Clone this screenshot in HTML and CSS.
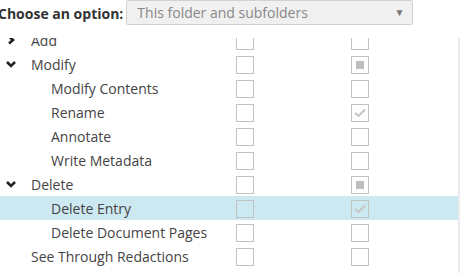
FILE: index.html
```html
<!DOCTYPE html>
<html lang="en">
<head>
    <meta charset="UTF-8">
    <title>Permissions</title>
    <link rel="stylesheet" href="styles.css">
</head>
<body>
    <div class="header">
        <label class="choose-label">Choose an option:</label>
        <div class="select-box">
            <span class="select-text">This folder and subfolders</span>
            <span class="select-arrow">&#9660;</span>
        </div>
    </div>

    <div class="list-view">
        <div class="list">
            <div class="row">
                <div class="name"><span class="chev"><svg width="10" height="10" viewBox="0 0 10 10"><path d="M3 1.5 L7 5 L3 8.5" fill="none" stroke="#222" stroke-width="2.6"/></svg></span>Add</div>
                <span class="check"></span>
                <span class="check"></span>
            </div>
            <div class="row">
                <div class="name"><span class="chev"><svg width="10" height="10" viewBox="0 0 10 10"><path d="M1 3 L5 7 L9 3" fill="none" stroke="#222" stroke-width="2.6"/></svg></span>Modify</div>
                <span class="check"></span>
                <span class="check partial"></span>
            </div>
            <div class="row">
                <div class="name sub">Modify Contents</div>
                <span class="check"></span>
                <span class="check"></span>
            </div>
            <div class="row">
                <div class="name sub">Rename</div>
                <span class="check"></span>
                <span class="check checked"><svg width="12" height="10" viewBox="0 0 12 10"><path d="M1 5 L4.5 8 L11 1.5" fill="none" stroke="#c4c4c4" stroke-width="2"/></svg></span>
            </div>
            <div class="row">
                <div class="name sub">Annotate</div>
                <span class="check"></span>
                <span class="check"></span>
            </div>
            <div class="row">
                <div class="name sub">Write Metadata</div>
                <span class="check"></span>
                <span class="check"></span>
            </div>
            <div class="row">
                <div class="name"><span class="chev"><svg width="10" height="10" viewBox="0 0 10 10"><path d="M1 3 L5 7 L9 3" fill="none" stroke="#222" stroke-width="2.6"/></svg></span>Delete</div>
                <span class="check"></span>
                <span class="check partial"></span>
            </div>
            <div class="row selected">
                <div class="name sub">Delete Entry</div>
                <span class="check"></span>
                <span class="check checked"><svg width="12" height="10" viewBox="0 0 12 10"><path d="M1 5 L4.5 8 L11 1.5" fill="none" stroke="#c4c4c4" stroke-width="2"/></svg></span>
            </div>
            <div class="row">
                <div class="name sub">Delete Document Pages</div>
                <span class="check"></span>
                <span class="check"></span>
            </div>
            <div class="row">
                <div class="name top">See Through Redactions</div>
                <span class="check"></span>
                <span class="check"></span>
            </div>
        </div>
    </div>
</body>
</html>
```

FILE: styles.css
```css
body {
    margin: 0;
    font-family: "Open Sans", Arial, sans-serif;
    color: #333;
    background: #fff;
    overflow: hidden;
}
.header {
    display: flex;
    align-items: center;
    gap: 3px;
    height: 26px;
    margin-left: -2px;
}
.choose-label {
    font-weight: bold;
    font-size: 14px;
    color: #333;
}
.select-box {
    display: flex;
    align-items: center;
    justify-content: space-between;
    width: 287px;
    height: 25px;
    margin-top: -2px;
    padding: 0 8px 0 10px;
    box-sizing: border-box;
    background-color: #f0f0f0;
    border: 1px solid #d2d2d2;
    border-radius: 2px;
}
.select-text {
    font-size: 14px;
    color: #888;
}
.select-arrow {
    font-size: 10px;
    color: #777;
}
.list-view {
    margin-top: 12px;
    height: 235px;
    overflow: hidden;
    width: 458px;
    border-right: 2px solid #ececec;
}
.list {
    margin-top: -10px;
}
.row {
    display: grid;
    grid-template-columns: 236px 115px 1fr;
    align-items: center;
    height: 24px;
    font-size: 14px;
    color: #444;
}
.row.selected {
    background-color: #cce8f1;
}
.name {
    display: flex;
    align-items: center;
    padding-left: 6px;
}
.name.sub {
    padding-left: 51px;
}
.name.top {
    padding-left: 31px;
}
.chev {
    display: flex;
    width: 25px;
}
.check {
    display: flex;
    align-items: center;
    justify-content: center;
    width: 18px;
    height: 18px;
    box-sizing: border-box;
    border: 1px solid #c2c2c2;
    margin-top: 2px;
}
.check.partial::after {
    content: "";
    width: 8px;
    height: 8px;
    background-color: #bdbdbd;
}
```
